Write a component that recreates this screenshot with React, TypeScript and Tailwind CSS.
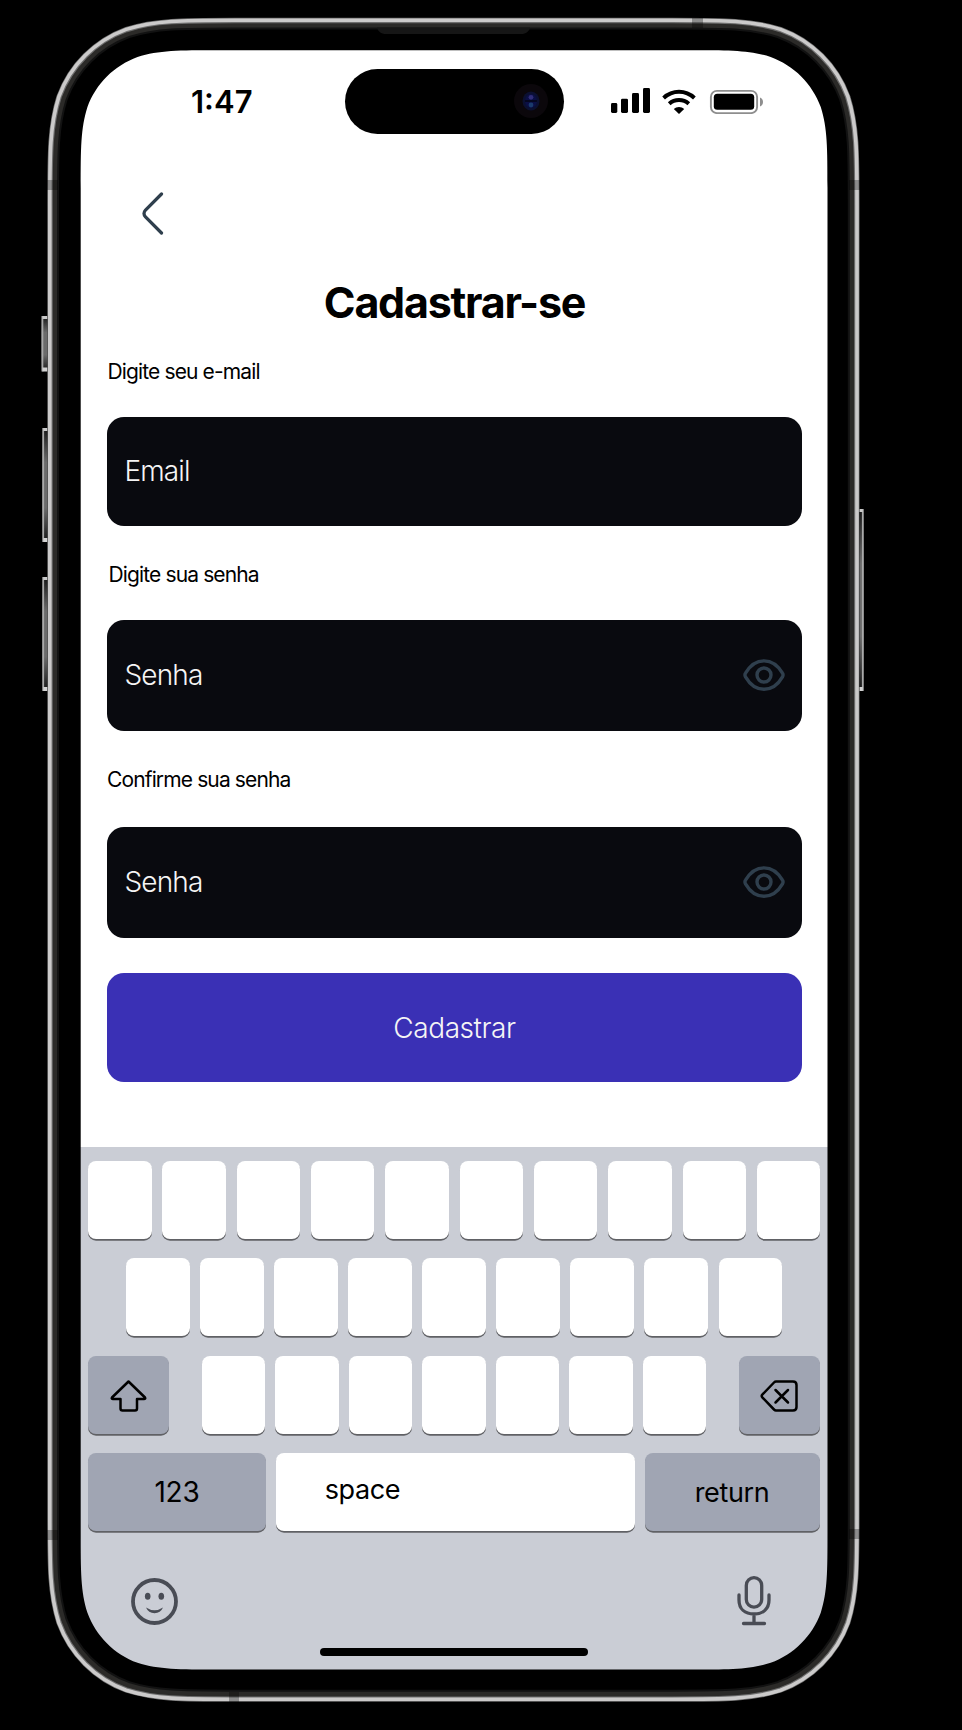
import React from "react";

function cornerPath(x: number, y: number, w: number, h: number, r: number) {
  const a = 1.52866 * r, b = 1.08849 * r, c = 0.86841 * r, d = 0.63149 * r;
  const e = 0.07491 * r, f = 0.37282 * r, g = 0.16906 * r;
  const X = x + w, Y = y + h;
  return [
    `M${x + a} ${y}H${X - a}`,
    `C${X - b} ${y} ${X - c} ${y} ${X - d} ${y + e}`,
    `C${X - f} ${y + g} ${X - g} ${y + f} ${X - e} ${y + d}`,
    `C${X} ${y + c} ${X} ${y + b} ${X} ${y + a}V${Y - a}`,
    `C${X} ${Y - b} ${X} ${Y - c} ${X - e} ${Y - d}`,
    `C${X - g} ${Y - f} ${X - f} ${Y - g} ${X - d} ${Y - e}`,
    `C${X - c} ${Y} ${X - b} ${Y} ${X - a} ${Y}H${x + a}`,
    `C${x + b} ${Y} ${x + c} ${Y} ${x + d} ${Y - e}`,
    `C${x + f} ${Y - g} ${x + g} ${Y - f} ${x + e} ${Y - d}`,
    `C${x} ${Y - c} ${x} ${Y - b} ${x} ${Y - a}V${y + a}`,
    `C${x} ${y + b} ${x} ${y + c} ${x + e} ${y + d}`,
    `C${x + g} ${y + f} ${x + f} ${y + g} ${x + d} ${y + e}`,
    `C${x + c} ${y} ${x + b} ${y} ${x + a} ${y}Z`,
  ].join("");
}

function SideButton({ x, y, w, h }: { x: number; y: number; w: number; h: number }) {
  const left = x < 400;
  return (
    <g>
      <rect x={x} y={y} width={w} height={h} fill="url(#side)" />
      <rect x={left ? x : x + w - 1.8} y={y} width={1.8} height={h} fill="#a9a9a9" />
      <rect x={x + (left ? 1 : 0)} y={y} width={w - 1} height={3} fill="#c9c9c9" />
      <rect x={x + (left ? 1 : 0)} y={y + h - 4} width={w - 1} height={4} fill="#d2d2d2" />
    </g>
  );
}

function DeviceFrame() {
  return (
    <svg className="pointer-events-none absolute inset-0" width="962" height="1730" viewBox="0 0 962 1730" fill="none">
      <defs>
        <linearGradient id="side" x1="0" y1="0" x2="0" y2="1">
          <stop offset="0" stopColor="#151515" />
          <stop offset=".3" stopColor="#6b6b6b" />
          <stop offset=".7" stopColor="#6b6b6b" />
          <stop offset="1" stopColor="#151515" />
        </linearGradient>
      </defs>
      <path
        fillRule="evenodd"
        fill="#000"
        d={"M0 0H962V1730H0Z" + cornerPath(80.7, 50.2, 746.8, 1619.4, 90)}
      />
      <path d={cornerPath(55, 25.5, 796.8, 1668.2, 116)} stroke="#121212" strokeWidth="8" />
      <path d={cornerPath(54, 24.5, 798.8, 1670.2, 117)} stroke="#2b2a28" strokeWidth="6" />
      <path d={cornerPath(50, 20.5, 806.8, 1678.6, 121)} stroke="#6e6e6e" strokeWidth="5.4" />
      <path d={cornerPath(49.8, 20.3, 807.2, 1679, 121)} stroke="#cbcaca" strokeWidth="3.6" />
      <g fill="#000" fillOpacity=".3">
        <rect x="47" y="180" width="11" height="10" />
        <rect x="849" y="180" width="11" height="10" />
        <rect x="47" y="1530" width="11" height="10" />
        <rect x="849" y="1529" width="11" height="10" />
        <rect x="692" y="18" width="11" height="10" />
        <rect x="229" y="1692" width="10" height="10" />
      </g>
      <SideButton x={41.5} y={316} w={5.8} h={55.5} />
      <SideButton x={42.3} y={428} w={5} h={114} />
      <SideButton x={42.3} y={577} w={5} h={114} />
      <SideButton x={859.5} y={509} w={4.2} h={182} />
      <path d="M377 27.5H530C529 31.5 526 34 521 34H386C381 34 378 31.5 377 27.5Z" fill="#161616" />
    </svg>
  );
}

function StatusBar() {
  return (
    <div className="flex h-[103px] items-center">
      <span className="-mt-px ml-[111px] w-[89px] text-[31px] leading-none font-semibold">1:47</span>
      <div className="-mt-[1px] ml-[65px] flex h-[65px] w-[219px] items-center justify-end rounded-full bg-black pr-4">
        <div className="flex size-[34px] items-center justify-center rounded-full bg-[#0b070b]">
          <svg width="18" height="20" viewBox="0 0 18 20">
            <ellipse cx="9" cy="10" rx="8.5" ry="9.5" fill="#0b1030" />
            <ellipse cx="9" cy="10" rx="6" ry="7" fill="#0b0f45" />
            <circle cx="9" cy="6.3" r="2.4" fill="#302e78" />
            <circle cx="9" cy="14" r="2.4" fill="#1a3a6c" />
            <rect x="3" y="9" width="12" height="2" fill="#050720" />
          </svg>
        </div>
      </div>
      <svg className="-mt-[3px] ml-[46px]" width="153" height="27" viewBox="610 86 153 27" fill="none">
        <g fill="#000">
          <rect x="611" y="102" width="6.3" height="10" rx="1.4" />
          <rect x="621" y="97.7" width="7" height="14.3" rx="1.4" />
          <rect x="632" y="92" width="7" height="20" rx="1.4" />
          <rect x="643" y="87" width="7" height="25" rx="1.4" />
          <path d="M679 113L673.8 108C676.5 105.2 681.5 105.2 684.2 108Z" />
        </g>
        <path d="M669.2 102.7C674.8 97.8 683.2 97.8 688.8 102.7" stroke="#000" strokeWidth="4" />
        <path d="M663.6 97C672.5 88.8 685.5 88.8 694.4 97" stroke="#000" strokeWidth="4" />
        <rect x="710.9" y="89.9" width="46.2" height="22.2" rx="6" stroke="#8e8e8e" strokeWidth="1.9" />
        <rect x="713.8" y="92.8" width="40.4" height="16" rx="3.5" fill="#000" />
        <path d="M760 96.5C764 98 764 104 760 105.5Z" fill="#8e8e8e" />
      </svg>
    </div>
  );
}

function EyeIcon() {
  return (
    <svg width="42" height="32" viewBox="0 0 42 32" fill="none" stroke="#2f3f4d" strokeWidth="3.4">
      <path d="M2.5 14.2C12 -2.3 30 -2.3 39.5 14.2Q40.6 16 39.5 17.8C30 34.3 12 34.3 2.5 17.8Q1.4 16 2.5 14.2Z" />
      <circle cx="21" cy="16" r="7" />
    </svg>
  );
}

function Label({ text, className }: { text: string; className: string }) {
  return <p className={"text-[21px] leading-[28px] tracking-[-0.87px] " + className}>{text}</p>;
}

function Field({ text, tall, eye }: { text: string; tall?: boolean; eye?: boolean }) {
  return (
    <div
      className={
        (tall ? "h-[111px]" : "h-[109px]") +
        " flex items-center justify-between rounded-[17px] bg-[#090a0f] pr-[17px] pb-px pl-[17.5px] text-[28px] font-[350] tracking-[-0.87px] text-[#f5f5f5]"
      }
    >
      <span>{text}</span>
      {eye && <EyeIcon />}
    </div>
  );
}

const keyBase = "flex h-[78px] items-center rounded-[8px] shadow-[0_1.7px_0_#606165]";

function Keys({ count, className }: { count: number; className: string }) {
  return (
    <div className={"flex justify-between " + className}>
      {Array.from({ length: count }, (_, i) => (
        <div key={i} className={keyBase + " w-[63.5px] bg-white"} />
      ))}
    </div>
  );
}

function Keyboard() {
  return (
    <div className="flex h-[523px] flex-col bg-[#cacdd5] pt-[14px]">
      <Keys count={10} className="mr-[7.5px] ml-[8px]" />
      <Keys count={9} className="mt-[19px] mr-[46px] ml-[46px]" />
      <div className="mt-[20px] mr-[8px] ml-[8px] flex justify-between">
        <div className={keyBase + " w-[81px] justify-center bg-[#a0a5b3] pt-px"}>
          <svg width="37" height="32" viewBox="0 0 37 32" fill="none" stroke="#000" strokeWidth="2.5" strokeLinejoin="round">
            <path d="M18.5 1.500L35 17.5Q35.8 19 34 19H27V28.5Q27 30.5 25 30.5H12.5Q10.5 30.5 10.5 28.5V19H3Q1.2 19 2 17.5Z" />
          </svg>
        </div>
        <Keys count={7} className="w-[505px]" />
        <div className={keyBase + " w-[81px] justify-center bg-[#a0a5b3] pt-px pr-[2px]"}>
          <svg width="38" height="32" viewBox="0 0 38 32" fill="none" stroke="#000" strokeWidth="2.5" strokeLinecap="round" strokeLinejoin="round">
            <path d="M16 1.5H33Q36.5 1.5 36.5 5V27Q36.5 30.5 33 30.5H16Q15 30.5 14 29.5L2.3 17.3Q1 16 2.3 14.7L14 2.5Q15 1.5 16 1.5Z" />
            <path d="M15.5 10L28 22.5M28 10L15.5 22.5" />
          </svg>
        </div>
      </div>
      <div className="mt-[19px] mr-[8px] ml-[8px] flex justify-between text-[27px] tracking-[-0.4px]">
        <div className={keyBase + " w-[178px] justify-center bg-[#a0a5b3] text-[28px] tracking-[-0.2px]"}>123</div>
        <div className={keyBase + " w-[358.5px] bg-white pb-[3px] pl-[48.5px]"}>space</div>
        <div className={keyBase + " w-[175px] justify-center bg-[#a0a5b3] pt-[2px] pr-px"}>return</div>
      </div>
      <div className="mt-[43px] flex items-start justify-between pr-[57px] pl-[51px]">
        <svg className="mt-[4px]" width="47" height="47" viewBox="0 0 47 47" fill="none">
          <circle cx="23.5" cy="23.5" r="21.5" stroke="#494c55" strokeWidth="3.8" />
          <ellipse cx="16.7" cy="18.3" rx="2.8" ry="3.5" fill="#494c55" />
          <ellipse cx="30.3" cy="18.3" rx="2.8" ry="3.5" fill="#494c55" />
          <path d="M15 29.5Q23.5 35 32 29.5Q29.5 35.2 23.5 35.2Q17.5 35.2 15 29.5Z" fill="#494c55" />
        </svg>
        <svg className="mt-[2px]" width="34" height="50" viewBox="0 0 34 50" fill="none" stroke="#494c55" strokeWidth="3.3" strokeLinecap="round">
          <rect x="9.3" y="1.7" width="15.4" height="29.5" rx="7.7" />
          <path d="M2 19V24C2 33 8 38 17 38S32 33 32 24V19M17 38V46M6.5 47.5H27.5" />
        </svg>
      </div>
      <div className="mt-[22px] mr-px h-[8px] w-[268px] self-center rounded-full bg-black" />
    </div>
  );
}

export default function App() {
  return (
    <div className="relative h-[1730px] w-[962px] overflow-hidden bg-black pt-[50px] pl-[80px] font-['Inter',sans-serif] text-black">
      <main className="flex h-[1620px] w-[748px] flex-col bg-white">
        <StatusBar />
        <div className="flex h-[994px] flex-col pr-[26px] pl-[27px]">
          <svg className="mt-[39px] ml-[35px] shrink-0" width="24" height="43" viewBox="0 0 24 43" fill="none" stroke="#2f3f4d" strokeWidth="3.2" strokeLinecap="round">
            <path d="M19.5 2L3.500 18Q0.500 21.500 3.500 25L19.500 41" />
          </svg>
          <h1 className="mt-[42px] text-center text-[43px] leading-[50px] font-bold tracking-[-1.25px]">Cadastrar-se</h1>
          <Label className="mt-[31px] mb-[31px] ml-[0.5px]" text="Digite seu e-mail" />
          <Field text="Email" />
          <Label className="mt-[35px] mb-[31px] ml-[1.5px]" text="Digite sua senha" />
          <Field text="Senha" tall eye />
          <Label className="mt-[35px] mb-[33px]" text="Confirme sua senha" />
          <Field text="Senha" tall eye />
          <button className="mt-[35px] h-[109px] rounded-[17px] bg-[#3a30b5] text-[28px] font-[350] tracking-[-0.45px] text-[#f5f5f5]">
            Cadastrar
          </button>
        </div>
        <Keyboard />
      </main>
      <DeviceFrame />
    </div>
  );
}
